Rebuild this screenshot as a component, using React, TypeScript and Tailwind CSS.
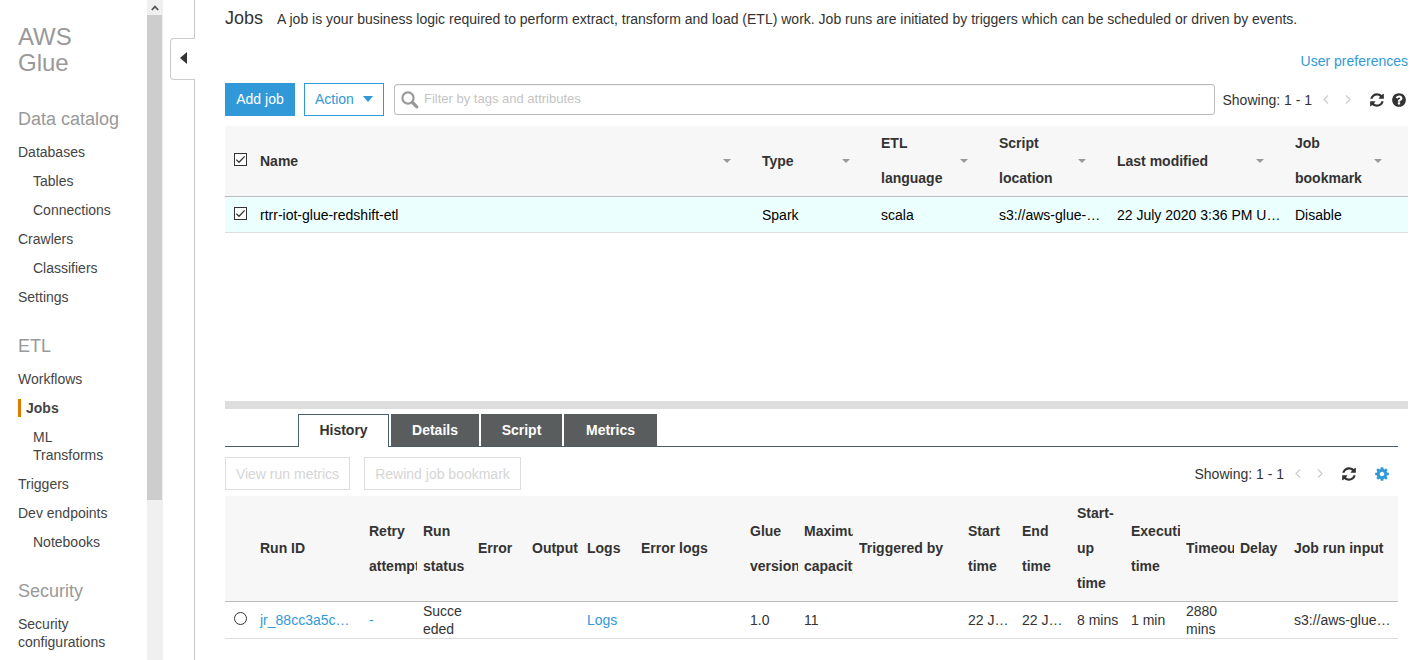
import type { ReactNode } from 'react';

const REFRESH =
  'M1639 1056q0 5-1 7-64 268-268 434.5t-478 166.5q-146 0-282.5-55t-243.5-157l-129 129q-19 19-45 19t-45-19-19-45v-448q0-26 19-45t45-19h448q26 0 45 19t19 45-19 45l-137 137q71 66 161 102t187 36q134 0 250-65t186-179q11-17 53-117 8-23 30-23h192q13 0 22.5 9.5t9.5 22.5zm25-800v448q0 26-19 45t-45 19h-448q-26 0-45-19t-19-45 19-45l138-138q-148-137-349-137-134 0-250 65t-186 179q-11 17-53 117-8 23-30 23h-199q-13 0-22.5-9.5t-9.5-22.5v-7q65-268 270-434.5t480-166.5q146 0 284 55.5t245 156.5l130-129q19-19 45-19t45 19 19 45z';
const GEAR =
  'M1152 896q0-106-75-181t-181-75-181 75-75 181 75 181 181 75 181-75 75-181zm512-109v222q0 12-8 23t-20 13l-185 28q-19 54-39 91 35 50 107 138 10 12 10 25t-9 23q-27 37-99 108t-94 71q-12 0-26-9l-138-108q-44 23-91 38-16 136-29 186-7 28-36 28h-222q-14 0-24.5-8.5t-11.5-21.5l-28-184q-49-16-90-37l-141 107q-10 9-25 9-14 0-25-11-126-114-165-168-7-10-7-23 0-12 8-23 15-21 51-66.5t54-70.5q-27-50-41-99l-183-27q-13-2-21-12.5t-8-23.5v-222q0-12 8-23t19-13l186-28q14-46 39-92-40-57-107-138-10-12-10-24 0-10 9-23 26-36 98.5-107.5t94.5-71.5q13 0 26 10l138 107q44-23 91-38 16-136 29-186 7-28 36-28h222q14 0 24.5 8.5t11.5 21.5l28 184q49 16 90 37l142-107q9-9 24-9 13 0 25 10 129 119 165 170 7 8 7 22 0 12-8 23-15 21-51 66.5t-54 70.5q26 50 41 98l183 28q13 2 21 12.5t8 23.5z';
const HELP =
  'M1024 1376v-192q0-14-9-23t-23-9h-192q-14 0-23 9t-9 23v192q0 14 9 23t23 9h192q14 0 23-9t9-23zm256-672q0-88-55.5-163t-138.5-116-170-41q-243 0-371 213-15 24 8 42l132 100q7 6 19 6 16 0 25-12 53-68 86-92 34-24 86-24 48 0 85.5 26t37.5 59q0 38-20 61t-68 45q-63 28-115.5 86.5t-52.5 125.5v36q0 14 9 23t23 9h192q14 0 23-9t9-23q0-19 21.5-49.5t54.5-49.5q32-18 49-28.5t46-35 44.5-48 28-60.5 12.5-81zm384 192q0 209-103 385.5t-279.5 279.5-385.5 103-385.5-103-279.5-279.5-103-385.5 103-385.5 279.5-279.5 385.5-103 385.5 103 279.5 279.5 103 385.5z';

function Glyph({ d }: { d: string }) {
  return (
    <svg viewBox="0 0 1792 1792" className="block size-4 fill-current" aria-hidden="true">
      <path d={d} />
    </svg>
  );
}

function Checkbox({ label }: { label: string }) {
  return (
    <label className="ml-[9px] grid size-[13px]">
      <input
        type="checkbox"
        defaultChecked
        aria-label={label}
        className="peer col-start-1 row-start-1 size-[13px] appearance-none border border-[#333] bg-white"
      />
      <svg
        viewBox="0 0 13 13"
        className="pointer-events-none invisible col-start-1 row-start-1 size-[13px] peer-checked:visible"
        aria-hidden="true"
      >
        <path d="M2.3 6.6 5 9.3 10.7 3.4" fill="none" stroke="#333" strokeWidth="1.3" />
      </svg>
    </label>
  );
}

function Pager() {
  return (
    <div className="flex items-center">
      <span className="whitespace-nowrap">Showing: 1 - 1</span>
      <button type="button" aria-label="Previous page" className="ml-[11px] text-[#ccc]">
        <svg viewBox="0 0 6 9" className="block h-[9px] w-[6px]" fill="none" stroke="currentColor" strokeWidth="1.2">
          <path d="M5 .5 1 4.5l4 4" />
        </svg>
      </button>
      <button type="button" aria-label="Next page" className="ml-4 text-[#ccc]">
        <svg viewBox="0 0 6 9" className="block h-[9px] w-[6px]" fill="none" stroke="currentColor" strokeWidth="1.2">
          <path d="m1 .5 4 4-4 4" />
        </svg>
      </button>
      <button type="button" aria-label="Refresh" className="ml-[18px]">
        <Glyph d={REFRESH} />
      </button>
    </div>
  );
}

type NavItem = { label: string; nested?: boolean; current?: boolean };

const sections: { title: string; items: NavItem[] }[] = [
  {
    title: 'Data catalog',
    items: [
      { label: 'Databases' },
      { label: 'Tables', nested: true },
      { label: 'Connections', nested: true },
      { label: 'Crawlers' },
      { label: 'Classifiers', nested: true },
      { label: 'Settings' },
    ],
  },
  {
    title: 'ETL',
    items: [
      { label: 'Workflows' },
      { label: 'Jobs', current: true },
      { label: 'ML Transforms', nested: true },
      { label: 'Triggers' },
      { label: 'Dev endpoints' },
      { label: 'Notebooks', nested: true },
    ],
  },
  { title: 'Security', items: [{ label: 'Security configurations' }] },
];

function itemClass(item: NavItem) {
  if (item.current) return 'block border-l-3 border-[#e07b00] pl-[5px] font-bold';
  if (item.nested) return 'block pl-[15px]';
  return 'block';
}

function Sidebar() {
  return (
    <nav aria-label="AWS Glue" className="w-[147px] shrink-0 pt-6 pr-6 pl-[18px] text-[#444]">
      <h1 className="mb-[3px] w-16 text-2xl leading-[26px] text-[#999]">AWS Glue</h1>
      {sections.map((section) => (
        <section key={section.title} className="pt-[29px]">
          <h2 className="text-lg leading-[22px] whitespace-nowrap text-[#999]">{section.title}</h2>
          <ul className="mt-[13px] flex flex-col gap-[11px] leading-[18px]">
            {section.items.map((item) => (
              <li key={item.label}>
                <a href="#" aria-current={item.current ? 'page' : undefined} className={itemClass(item)}>
                  {item.label}
                </a>
              </li>
            ))}
          </ul>
        </section>
      ))}
    </nav>
  );
}

function ScrollTrack() {
  return (
    <div className="flex w-4 shrink-0 flex-col bg-[#f0f0f0]" aria-hidden="true">
      <div className="flex h-[15px] items-center justify-center">
        <svg viewBox="0 0 8 6" className="h-[6px] w-[8px]" fill="none" stroke="#555" strokeWidth="1.8">
          <path d="M.8 5 4 1.6 7.2 5" />
        </svg>
      </div>
      <div className="mr-px grow-97 bg-[#cdcdcd]" />
      <div className="grow-32" />
    </div>
  );
}

function CollapseRail() {
  return (
    <div className="flex w-8 shrink-0 flex-col">
      <div className="h-[38px] border-r border-[#ccc]" />
      <button
        type="button"
        aria-label="Collapse navigation"
        className="ml-[7px] flex h-[42px] items-center rounded-l border border-r-0 border-[#ccc] pb-[2px] pl-[9px]"
      >
        <svg viewBox="0 0 7 12" className="h-3 w-[7px] fill-[#333]">
          <path d="M7 0v12L0 6z" />
        </svg>
      </button>
      <div className="grow border-r border-[#ccc]" />
    </div>
  );
}

const jobColumns = ['Name', 'Type', 'ETL language', 'Script location', 'Last modified', 'Job bookmark'];
const jobRow = [
  'rtrr-iot-glue-redshift-etl',
  'Spark',
  'scala',
  's3://aws-glue-…',
  '22 July 2020 3:36 PM U…',
  'Disable',
];

function JobsTable() {
  return (
    <table className="w-full table-fixed border-separate border-spacing-0 text-left">
      <colgroup>
        <col className="w-[35px]" />
        <col />
        <col className="w-[119px]" />
        <col className="w-[118px]" />
        <col className="w-[118px]" />
        <col className="w-[178px]" />
        <col className="w-[113px]" />
      </colgroup>
      <thead className="bg-[#f7f7f7]">
        <tr>
          <th className="border-b border-[#bbb] p-0 pb-[3px]">
            <Checkbox label="Select all jobs" />
          </th>
          {jobColumns.map((name) => (
            <th key={name} className="group h-[71px] border-b border-[#bbb] p-0 leading-[35px]">
              <div className="flex items-center justify-between gap-2 pr-[31px] group-last:pr-[26px]">
                <span>{name}</span>
                <svg viewBox="0 0 8 4" className="h-1 w-2 shrink-0 fill-[#999]" aria-hidden="true">
                  <path d="M0 0h8L4 4z" />
                </svg>
              </div>
            </th>
          ))}
        </tr>
      </thead>
      <tbody className="bg-[#ebffff] text-black">
        <tr>
          <td className="border-b border-[#ddd] p-0 pb-[3px]">
            <Checkbox label="Select rtrr-iot-glue-redshift-etl" />
          </td>
          {jobRow.map((value) => (
            <td key={value} className="h-9 border-b border-[#ddd] p-0 leading-5 whitespace-nowrap">
              {value}
            </td>
          ))}
        </tr>
      </tbody>
    </table>
  );
}

const link = (text: string) => (
  <a href="#" className="text-[#3199d8]">
    {text}
  </a>
);

const runColumns: { head: ReactNode; value?: ReactNode; col: string }[] = [
  { head: 'Run ID', value: link('jr_88cc3a5c…'), col: 'w-[109px]' },
  { head: 'Retry attempts', value: link('-'), col: 'w-[54px]' },
  { head: 'Run status', value: <span className="block w-[42px] break-all whitespace-normal">Succeeded</span>, col: 'w-[55px]' },
  { head: 'Error', col: 'w-[54px]' },
  { head: 'Output', col: 'w-[55px]' },
  { head: 'Logs', value: link('Logs'), col: 'w-[54px]' },
  { head: 'Error logs', col: 'w-[109px]' },
  { head: 'Glue version', value: '1.0', col: 'w-[54px]' },
  { head: 'Maximum capacity', value: '11', col: 'w-[55px]' },
  { head: 'Triggered by', col: 'w-[109px]' },
  { head: 'Start time', value: '22 J…', col: 'w-[54px]' },
  { head: 'End time', value: '22 J…', col: 'w-[55px]' },
  { head: <>Start-<br />up<br />time</>, value: '8 mins', col: 'w-[54px]' },
  { head: 'Execution time', value: '1 min', col: 'w-[55px]' },
  { head: 'Timeout', value: <span className="block whitespace-normal">2880 mins</span>, col: 'w-[54px]' },
  { head: 'Delay', col: 'w-[54px]' },
  { head: 'Job run input', value: 's3://aws-glue…', col: '' },
];

function RunsTable() {
  return (
    <table className="mt-[6px] w-full table-fixed border-separate border-spacing-0 text-left">
      <colgroup>
        <col className="w-[35px]" />
        {runColumns.map((c, i) => (
          <col key={i} className={c.col} />
        ))}
      </colgroup>
      <thead className="bg-[#f7f7f7]">
        <tr>
          <th className="border-b border-[#bbb] p-0" aria-label="Select" />
          {runColumns.map((c, i) => (
            <th key={i} className="h-[106px] border-b border-[#bbb] p-0 leading-[35px]">
              <div className="mr-[6px] overflow-hidden">{c.head}</div>
            </th>
          ))}
        </tr>
      </thead>
      <tbody>
        <tr>
          <td className="border-b border-[#ddd] p-0 pb-[3px]">
            <input
              type="radio"
              name="run"
              aria-label="Select run jr_88cc3a5c"
              className="ml-[9px] block size-[13px] appearance-none rounded-full border border-[#333] bg-white checked:border-4"
            />
          </td>
          {runColumns.map((c, i) => (
            <td key={i} className="h-[37px] border-b border-[#ddd] p-0 leading-[18px] whitespace-nowrap">
              {c.value}
            </td>
          ))}
        </tr>
      </tbody>
    </table>
  );
}

const tabs = [
  { label: 'Details', width: 'w-[88px]' },
  { label: 'Script', width: 'w-[81px]' },
  { label: 'Metrics', width: 'w-[93px]' },
];

export default function App() {
  return (
    <div className="flex min-h-screen bg-white font-['Liberation_Sans',Arial,sans-serif] text-sm text-[#333]">
      <Sidebar />
      <ScrollTrack />
      <CollapseRail />
      <main className="min-w-0 grow pt-[6px] pr-[13px] pl-[30px]">
        <header className="flex items-baseline gap-[14px] leading-6">
          <h2 className="text-lg leading-6">Jobs</h2>
          <p>
            A job is your business logic required to perform extract, transform and load (ETL) work. Job runs are
            initiated by triggers which can be scheduled or driven by events.
          </p>
        </header>
        <div className="mt-5 text-right leading-5">{link('User preferences')}</div>

        <div className="mt-3 flex h-[33px] items-center">
          <button type="button" className="h-full w-[70px] bg-[#3199d8] pb-[2px] text-white">
            Add job
          </button>
          <button
            type="button"
            className="ml-[9px] flex h-full w-20 items-center gap-[9px] border border-[#3199d8] pb-[2px] pl-[10px] text-[#3199d8]"
          >
            Action
            <svg viewBox="0 0 10 6" className="h-[6px] w-[10px] fill-current" aria-hidden="true">
              <path d="M0 0h10L5 6z" />
            </svg>
          </button>
          <label className="mr-2 ml-[10px] flex h-[31px] grow items-center gap-[5px] rounded-[3px] border border-[#bbb] pl-[6px] shadow-[inset_0_1px_1px_#0000000d]">
            <svg viewBox="0 0 18 18" className="size-[18px] shrink-0" fill="none" stroke="#999" aria-hidden="true">
              <circle cx="7" cy="7" r="5.6" strokeWidth="2.2" />
              <path d="m11.5 11.5 4.3 4.3" strokeWidth="3.2" strokeLinecap="round" />
            </svg>
            <input
              type="text"
              aria-label="Filter jobs"
              placeholder="Filter by tags and attributes"
              className="min-w-0 grow bg-transparent text-[13px] outline-none placeholder:text-[#c4c4c4]"
            />
          </label>
          <Pager />
          <button type="button" aria-label="Help" className="mr-px ml-[6px]">
            <Glyph d={HELP} />
          </button>
        </div>

        <div className="mt-[10px] min-h-[275px]">
          <JobsTable />
        </div>

        <div className="h-2 bg-[#ddd]" />

        <section className="mt-[5px] pr-[10px]">
          <div role="tablist" className="flex gap-[2px] border-b border-[#485e6d] pl-[73px] font-bold">
            <button
              type="button"
              role="tab"
              aria-selected="true"
              className="-mb-px h-[33px] w-[91px] border border-b-0 border-[#485e6d] bg-white pb-[2px]"
            >
              History
            </button>
            {tabs.map((tab) => (
              <button
                key={tab.label}
                type="button"
                role="tab"
                aria-selected="false"
                className={`h-8 bg-[#5a5d5d] text-white ${tab.width}`}
              >
                {tab.label}
              </button>
            ))}
          </div>

          <div className="mt-[10px] flex h-[33px] items-center">
            <button type="button" disabled className="h-full w-[125px] border border-[#ddd] text-[#d5d5d5]">
              View run metrics
            </button>
            <button type="button" disabled className="mr-auto ml-[14px] h-full w-[157px] border border-[#ddd] text-[#d5d5d5]">
              Rewind job bookmark
            </button>
            <Pager />
            <button type="button" aria-label="Settings" className="mr-2 ml-[17px] text-[#3199d8]">
              <Glyph d={GEAR} />
            </button>
          </div>

          <RunsTable />
        </section>
      </main>
    </div>
  );
}
